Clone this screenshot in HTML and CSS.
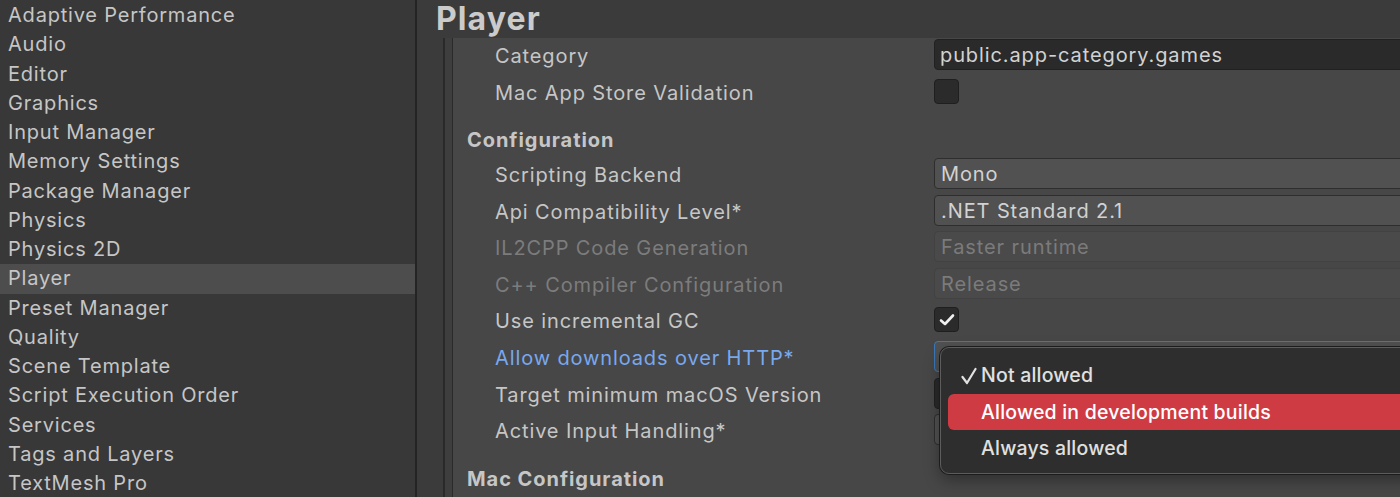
FILE: index.html
```html
<!DOCTYPE html>
<html>
<head>
<meta charset="utf-8">
<link rel="stylesheet" href="styles.css">
</head>
<body>
<div class="app">
  <nav class="sidebar">
    <div class="nav-item">Adaptive Performance</div>
    <div class="nav-item">Audio</div>
    <div class="nav-item">Editor</div>
    <div class="nav-item">Graphics</div>
    <div class="nav-item">Input Manager</div>
    <div class="nav-item">Memory Settings</div>
    <div class="nav-item">Package Manager</div>
    <div class="nav-item">Physics</div>
    <div class="nav-item">Physics 2D</div>
    <div class="nav-item selected">Player</div>
    <div class="nav-item">Preset Manager</div>
    <div class="nav-item">Quality</div>
    <div class="nav-item">Scene Template</div>
    <div class="nav-item">Script Execution Order</div>
    <div class="nav-item">Services</div>
    <div class="nav-item">Tags and Layers</div>
    <div class="nav-item">TextMesh Pro</div>
  </nav>
  <main class="main">
    <h1 class="title">Player</h1>
    <div class="inspector">
      <div class="gutter"></div>
      <div class="content">
        <div class="row">
          <div class="label">Category</div>
          <div class="field text-field">public.app-category.games</div>
        </div>
        <div class="row">
          <div class="label">Mac App Store Validation</div>
          <div class="field-slot"><div class="checkbox"></div></div>
        </div>
        <div class="section">Configuration</div>
        <div class="row">
          <div class="label">Scripting Backend</div>
          <div class="field dropdown">Mono</div>
        </div>
        <div class="row">
          <div class="label">Api Compatibility Level*</div>
          <div class="field dropdown">.NET Standard 2.1</div>
        </div>
        <div class="row">
          <div class="label disabled">IL2CPP Code Generation</div>
          <div class="field dropdown is-disabled">Faster runtime</div>
        </div>
        <div class="row">
          <div class="label disabled">C++ Compiler Configuration</div>
          <div class="field dropdown is-disabled">Release</div>
        </div>
        <div class="row">
          <div class="label">Use incremental GC</div>
          <div class="field-slot">
            <div class="checkbox">
              <svg class="tick" viewBox="0 0 16 14" width="16" height="14"><path d="M2 7.5 L6 11 L14 2.5" fill="none" stroke="#f0f0f0" stroke-width="2.6" stroke-linecap="round" stroke-linejoin="round"/></svg>
            </div>
          </div>
        </div>
        <div class="row">
          <div class="label modified">Allow downloads over HTTP*</div>
          <div class="field dropdown focused"></div>
        </div>
        <div class="row">
          <div class="label">Target minimum macOS Version</div>
          <div class="field text-field"></div>
        </div>
        <div class="row">
          <div class="label">Active Input Handling*</div>
          <div class="field dropdown"></div>
        </div>
        <div class="section">Mac Configuration</div>
        <div class="row">
          <div class="label"></div>
          <div class="field text-field"></div>
        </div>
      </div>
    </div>
  </main>
</div>

<div class="popup">
  <div class="menu-item">
    <svg class="menu-check" viewBox="0 0 16 18" width="16" height="18"><path d="M1.5 10 L6 16 L14.5 2" fill="none" stroke="#e2e2e2" stroke-width="2.2" stroke-linecap="round" stroke-linejoin="round"/></svg>
    <span>Not allowed</span>
  </div>
  <div class="menu-item active"><span>Allowed in development builds</span></div>
  <div class="menu-item"><span>Always allowed</span></div>
</div>
</body>
</html>
```

FILE: styles.css
```css
html, body {
  margin: 0;
  padding: 0;
  width: 1400px;
  height: 497px;
  overflow: hidden;
  background: #383838;
  font-family: Inter, "Noto Sans", sans-serif;
  color: #c4c4c4;
}

.app {
  display: flex;
  height: 497px;
  overflow: hidden;
}

.sidebar {
  width: 415px;
  flex: none;
  background: #383838;
  border-right: 2px solid #242424;
  padding-top: 1.2px;
}

.nav-item {
  height: 29.25px;
  line-height: 29.25px;
  padding-left: 8px;
  font-size: 20px;
  letter-spacing: 0.8px;
  color: #c6c6c6;
  white-space: nowrap;
}

.nav-item.selected {
  background: #4d4d4d;
}

.main {
  flex: 1;
  display: flex;
  flex-direction: column;
  background: #3b3b3b;
  min-width: 0;
  overflow: hidden;
}

.title {
  margin: 0;
  height: 38px;
  flex: none;
  line-height: 38px;
  padding-left: 19px;
  font-size: 32px;
  font-weight: 700;
  color: #cbcbcb;
  letter-spacing: 1.1px;
}

.inspector {
  flex: 1;
  display: flex;
  padding-left: 26px;
}

.gutter {
  width: 7px;
  flex: none;
  background: #3e3e3e;
  border-left: 2px solid #2a2a2a;
  border-right: 1px solid #2a2a2a;
}

.content {
  flex: 1;
  background: #474747;
  min-width: 0;
}

.row {
  display: flex;
  align-items: flex-start;
  height: 36.6px;
}

.label {
  width: 481px;
  flex: none;
  padding-left: 42px;
  padding-top: 2px;
  line-height: 32px;
  font-size: 20px;
  letter-spacing: 0.88px;
  color: #c6c6c6;
  white-space: nowrap;
  box-sizing: border-box;
}

.label.disabled {
  color: #7c7c7c;
}

.label.modified {
  color: #79a8ee;
}

.section {
  height: 45.8px;
  box-sizing: border-box;
  padding-top: 14px;
  padding-left: 14px;
  line-height: 30px;
  font-size: 20px;
  font-weight: 700;
  letter-spacing: 0.95px;
  color: #c6c6c6;
}

.field {
  flex: none;
  width: 520px;
  height: 31px;
  margin-top: 1px;
  box-sizing: border-box;
  border-radius: 4px;
  font-size: 20px;
  line-height: 30px;
  padding-left: 6px;
  letter-spacing: 0.9px;
  white-space: nowrap;
  color: #d2d2d2;
}

.text-field {
  background: #2a2a2a;
  border: 1px solid #212121;
  padding-left: 5px;
}

.dropdown {
  background: #515151;
  border: 1px solid #2e2e2e;
}

.dropdown.is-disabled {
  background: #4a4a4a;
  border-color: #424242;
  color: #7b7b7b;
}

.dropdown.focused {
  border: 1px solid #3a79bb;
}

.field-slot {
  height: 31px;
  margin-top: 1px;
  display: flex;
  align-items: center;
}

.checkbox {
  width: 25px;
  height: 25px;
  box-sizing: border-box;
  background: #2b2b2b;
  border: 1px solid #1f1f1f;
  border-radius: 4px;
  display: flex;
  align-items: center;
  justify-content: center;
}

.tick {
  display: block;
}

.popup {
  position: absolute;
  left: 940px;
  top: 347px;
  width: 520px;
  height: 127px;
  box-sizing: border-box;
  background: #2e2e2e;
  border: 1px solid #5c5c5c;
  border-radius: 9px;
  box-shadow: 0 0 0 1px #1c1c1c, 0 6px 16px rgba(0, 0, 0, 0.35);
  padding: 9px 0 0 7px;
  font-family: Inter, "Noto Sans", sans-serif;
}

.menu-item {
  position: relative;
  height: 36.5px;
  line-height: 36.5px;
  padding-left: 33px;
  font-size: 19.5px;
  font-weight: 500;
  letter-spacing: 0.2px;
  color: #e0e0e0;
  border-radius: 6px;
  white-space: nowrap;
}

.menu-item.active {
  background: #cf3b43;
  color: #ffffff;
}

.menu-check {
  position: absolute;
  left: 13px;
  top: 10px;
}
```
